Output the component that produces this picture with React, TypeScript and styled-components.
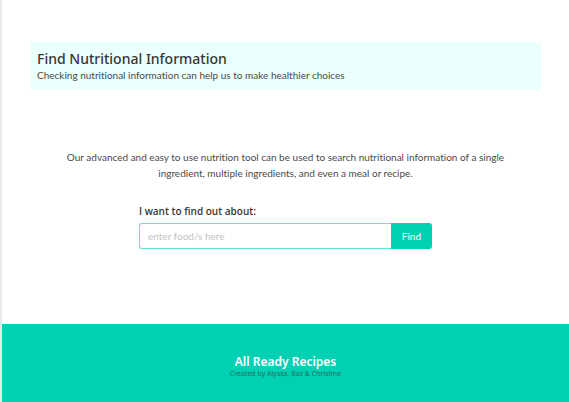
import React from "react";
import styled, { createGlobalStyle } from "styled-components";

const GlobalStyle = createGlobalStyle`
  *, *::before, *::after { box-sizing: border-box; }
  body { margin: 0; background: #fff; }
  body, input, button {
    font-family: Lato, "Open Sans", sans-serif;
    font-variant-ligatures: none;
  }
`;

const Page = styled.div`
  display: flex;
  flex-direction: column;
  min-height: 100vh;
  border-left: 2px solid #e8e8e8;
  color: #363636;
`;

const Main = styled.main`
  flex: 1;
  padding: 42px 28px 0;
`;

const Banner = styled.header`
  padding: 8px 7px;
  background: #ebfffc;
`;

const Title = styled.h1`
  margin: 0;
  font-family: "Noto Sans", sans-serif;
  font-size: 14px;
  line-height: 18px;
  font-weight: 500;
`;

const Subtitle = styled.p`
  margin: 0;
  color: #4a4a4a;
  font-size: 10px;
  line-height: 14px;
`;

const Intro = styled.p`
  max-width: 460px;
  margin: 59px auto 0;
  color: #4a4a4a;
  font-size: 10px;
  line-height: 16px;
  text-align: center;
`;

const SearchForm = styled.form`
  max-width: 293px;
  margin: 22px auto 0;
`;

const Label = styled.label`
  display: block;
  margin-bottom: 4px;
  font-family: "Open Sans", sans-serif;
  font-size: 10px;
  line-height: 16px;
  font-weight: 600;
`;

const Field = styled.div`
  display: flex;
  height: 26px;
`;

const FoodInput = styled.input`
  flex: 1;
  min-width: 0;
  padding: 0 8px;
  border: 1px solid #66e3d1;
  border-right: 0;
  border-radius: 3px 0 0 3px;
  background: #fff;
  color: #363636;
  font-size: 10px;
  &::placeholder { color: #c3c3c3; opacity: 1; }
`;

const FindButton = styled.button`
  padding: 0 11px;
  border: 0;
  border-radius: 0 3px 3px 0;
  background: #00d1b2;
  color: #fff;
  font-size: 10px;
`;

const Footer = styled.footer`
  padding: 31px 16px 24px;
  background: #00d1b2;
  font-family: "Noto Sans", sans-serif;
  text-align: center;
`;

const Brand = styled.h2`
  margin: 0;
  color: #fff;
  font-size: 12px;
  line-height: 14px;
  font-weight: 600;
`;

const Credit = styled.p`
  margin: 0;
  color: #2a6e64;
  font-size: 7px;
  line-height: 9px;
`;

export default function App() {
  return (
    <>
      <GlobalStyle />
      <Page>
        <Main>
          <Banner>
            <Title>Find Nutritional Information</Title>
            <Subtitle>Checking nutritional information can help us to make healthier choices</Subtitle>
          </Banner>
          <Intro>
            Our advanced and easy to use nutrition tool can be used to search nutritional
            information of a single ingredient, multiple ingredients, and even a meal or recipe.
          </Intro>
          <SearchForm onSubmit={(event: React.FormEvent) => event.preventDefault()}>
            <Label htmlFor="food">I want to find out about:</Label>
            <Field>
              <FoodInput id="food" type="text" placeholder="enter food/s here" />
              <FindButton type="submit">Find</FindButton>
            </Field>
          </SearchForm>
        </Main>
        <Footer>
          <Brand>All Ready Recipes</Brand>
          <Credit>Created by Alyssa, Baz &amp; Christine</Credit>
        </Footer>
      </Page>
    </>
  );
}
